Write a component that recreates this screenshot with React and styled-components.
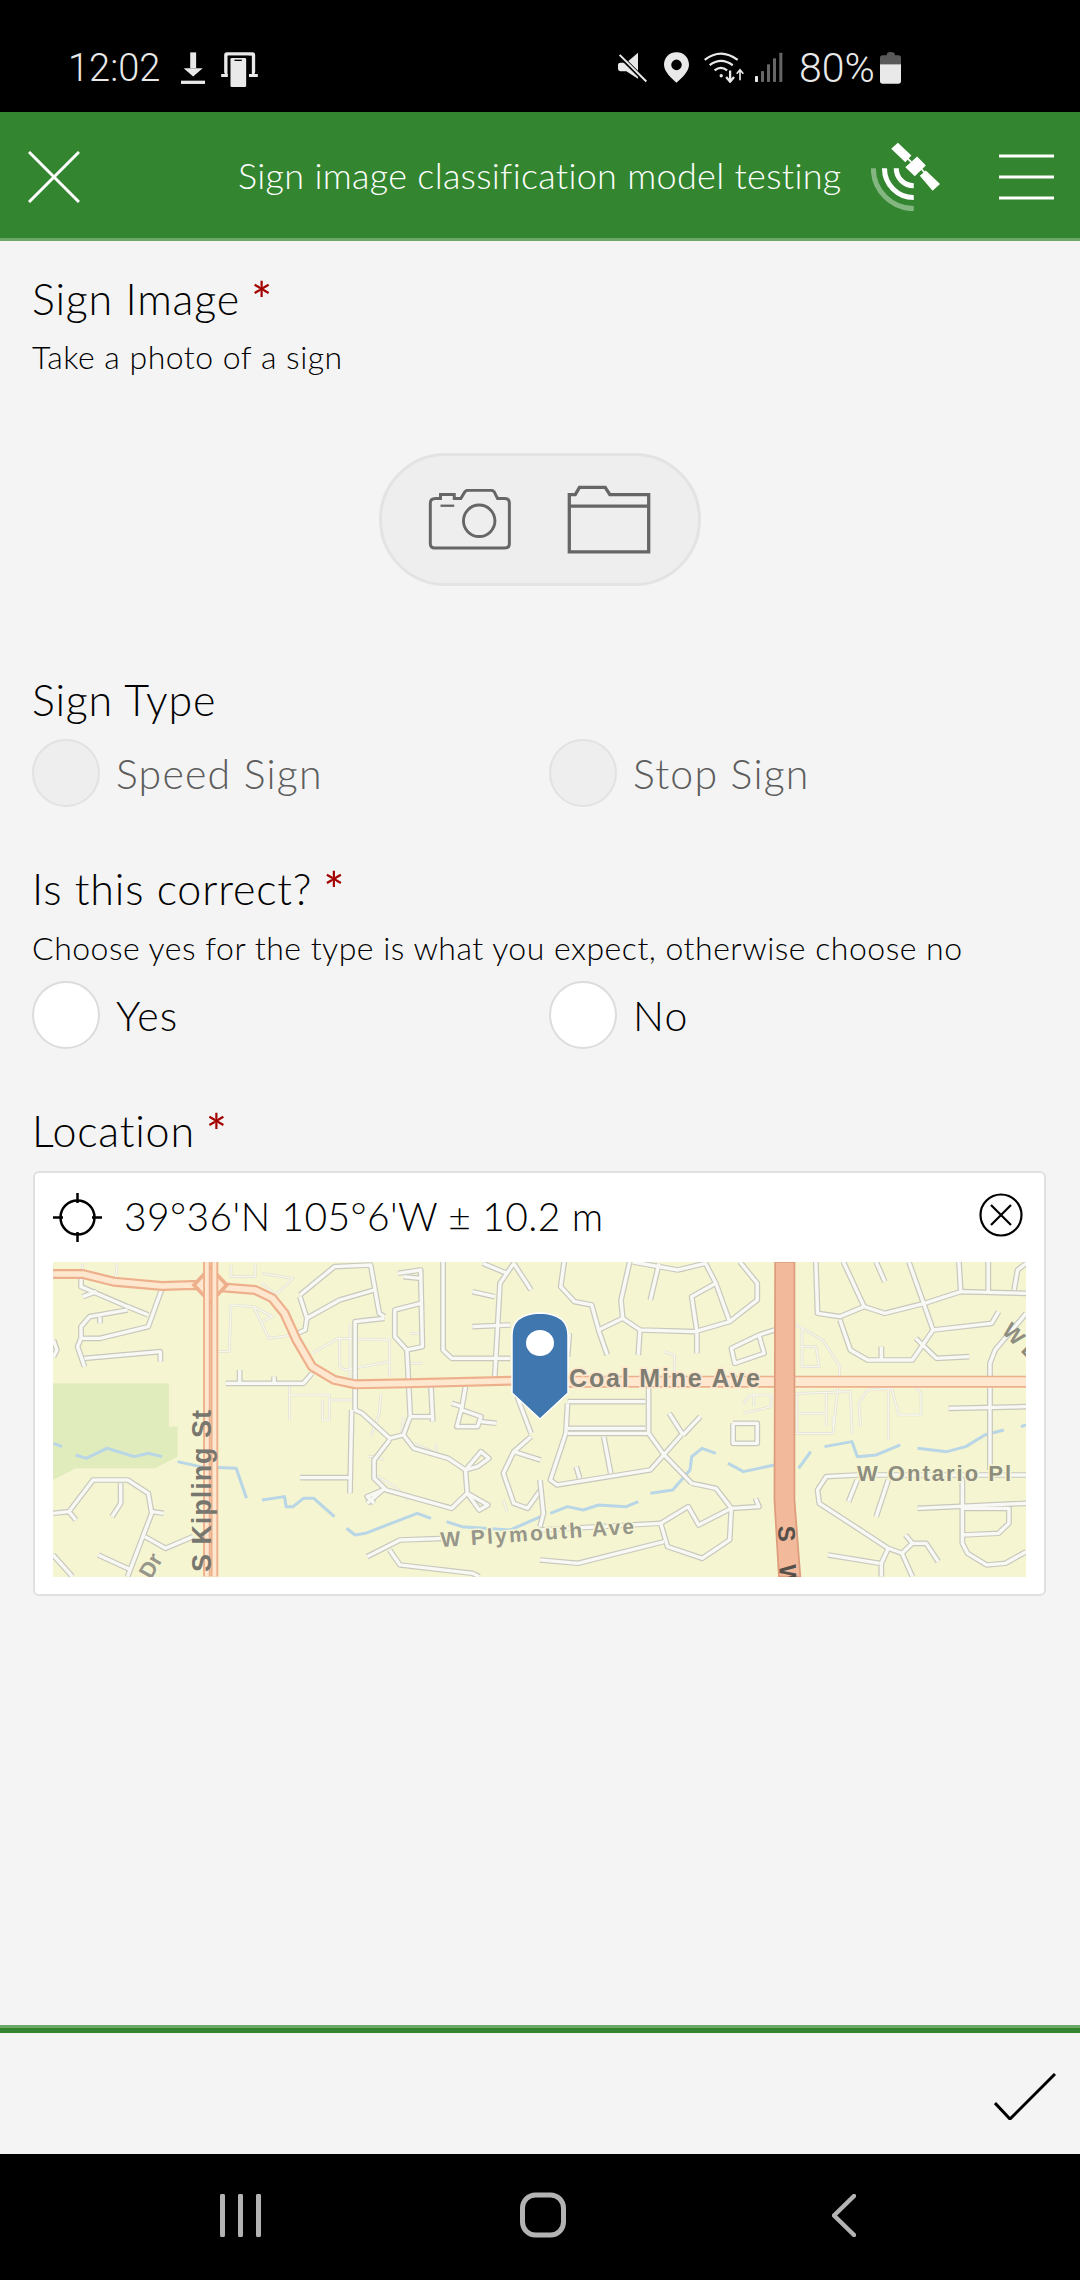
import React from 'react'
import styled, { createGlobalStyle } from 'styled-components'

const GlobalStyle = createGlobalStyle`
  html, body { margin: 0; padding: 0; background: #f4f4f4; }
  * { box-sizing: border-box; }
`

const Page = styled.div`
  width: 1080px;
  height: 2280px;
  display: flex;
  flex-direction: column;
  background: #f4f4f4;
  font-family: Lato, "Open Sans", sans-serif;
  color: #000;
  overflow: hidden;
`

const StatusBar = styled.div`
  height: 112px;
  flex: none;
  background: #000;
  color: #e9e9e9;
  display: flex;
  align-items: flex-start;
  padding: 52px 0 0 68px;
`
const StatusText = styled.span`
  font-family: Roboto, sans-serif;
  font-weight: 300;
  font-size: ${p => p.$size || 38}px;
  line-height: 32px;
  margin-left: ${p => p.$left || 0}px;
  width: ${p => p.$width}px;
  white-space: nowrap;
`
const StatusIcon = styled.svg`
  flex: none;
  display: block;
  margin-left: ${p => p.$left || 0}px;
`

const Header = styled.div`
  height: 129px;
  flex: none;
  background: #33862f;
  border-bottom: 3px solid #6ca968;
  display: flex;
  align-items: center;
  padding: 0 26px 0 28px;
  color: #fff;
`
const Title = styled.div`
  font-size: 36px;
  font-weight: 300;
  line-height: 44px;
  margin-left: 158px;
  width: 634px;
  white-space: nowrap;
  letter-spacing: 0.3px;
`
const HeaderIcon = styled.svg`
  flex: none;
  display: block;
  margin-left: ${p => p.$left || 0}px;
  margin-top: ${p => p.$top || 0}px;
`

const Content = styled.div`
  flex: 1;
  padding: 34px 32px 0;
`
const Label = styled.div`
  font-size: 43px;
  font-weight: 300;
  line-height: 48px;
  letter-spacing: 0.8px;
  margin-top: ${p => p.$top || 0}px;
`
const Required = styled.span`
  color: #a30000;
  font-size: 50px;
  font-weight: 400;
  line-height: 0;
  margin-left: 11px;
  vertical-align: -4px;
`
const Hint = styled.div`
  font-size: 32px;
  font-weight: 300;
  line-height: 36px;
  letter-spacing: 0.5px;
  margin-top: ${p => p.$top || 0}px;
`
const PillRow = styled.div`
  display: flex;
  justify-content: center;
  margin-top: 78px;
`
const Pill = styled.div`
  width: 322px;
  height: 133px;
  border-radius: 67px;
  background: #eeeeee;
  border: 3px solid #e3e3e3;
  display: flex;
  align-items: center;
  padding-left: 46px;
  gap: 55px;
`
const RadioRow = styled.div`
  display: grid;
  grid-template-columns: 517px 1fr;
  margin-top: ${p => p.$top}px;
`
const RadioItem = styled.div`
  display: flex;
  align-items: center;
  gap: 16px;
`
const Circle = styled.div`
  width: 68px;
  height: 68px;
  border-radius: 50%;
  border: 2px solid ${p => (p.$disabled ? '#e2e2e2' : '#dcdcdc')};
  background: ${p => (p.$disabled ? '#eeeeee' : '#ffffff')};
`
const RadioText = styled.span`
  font-size: 41px;
  font-weight: 300;
  letter-spacing: 1.2px;
  color: ${p => (p.$disabled ? '#5c5c5c' : '#000')};
`
const Card = styled.div`
  margin: 16px 2px 0 1px;
  height: 425px;
  border: 2px solid #e0e0e0;
  border-radius: 6px;
  background: #fff;
  padding: 20px 21px 0 18px;
`
const CardTop = styled.div`
  height: 69px;
  display: flex;
  align-items: flex-start;
`
const Coords = styled.div`
  flex: 1;
  font-size: 39px;
  font-weight: 300;
  line-height: 46px;
  margin-left: 22px;
  color: #000;
  letter-spacing: 0.4px;
`
const MapSvg = styled.svg`
  display: block;
  width: 973px;
  height: 315px;
  background: #f6f5d2;
`
const GreenRule = styled.div`
  height: 8px;
  flex: none;
  background: #33862f;
  border-top: 3px solid #6ca968;
`
const ToolBar = styled.div`
  height: 121px;
  flex: none;
  display: flex;
  justify-content: flex-end;
  padding: 40px 24px 0 0;
`
const NavBar = styled.div`
  height: 126px;
  flex: none;
  background: #000;
  display: flex;
  align-items: center;
  gap: 259px;
  padding: 0 0 4px 220px;
`
const BackIcon = styled.svg`
  margin-left: 7px;
  display: block;
`

// roads are written in crop coordinates (2.9x wide, 3x tall), one list per half of the map
const leftRoads = [
  '235,380 235,410 370,470 430,495', '470,415 430,530 290,565 235,565 225,590 245,650',
  '235,565 235,530 260,500 370,480', '245,625 465,605 465,635', '290,500 290,520', '240,440 280,425',
  '155,570 165,600 155,620', '870,435 970,350 1075,345 1100,490 1115,500', '870,440 890,505 985,450 1085,420',
  '890,505 885,540 850,555', '1155,370 1220,360 1225,590 1180,600 1145,560 1145,480 1220,460', '1170,380 1220,385',
  '1115,505 1030,515 1030,780 1050,790 1130,865 1170,855 1200,895 1300,925 1350,960 1355,1030 1310,1075 1120,1020 1085,985 1085,930 1130,870',
  '1180,600 1190,800 1170,855', '1285,336 1285,600 1310,625 1480,625', '1490,340 1450,400 1435,680',
  '1370,425 1435,440', '1370,530 1480,525', '1490,340 1540,420', '1400,340 1470,370',
  '655,700 880,700 905,670', '695,660 695,700', '795,680 795,700', '1020,780 1015,1030', '870,983 1015,983',
  '1250,710 1255,815', '1190,800 1255,800', '1350,710 1340,770 1310,760', '1340,770 1325,830 1385,830 1395,800 1340,780',
  '1395,815 1440,820', '1500,740 1540,850', '1540,860 1490,905 1460,970 1490,1060 1530,1075 1568,1020', '1490,905 1568,930',
  '154,1090 200,1085 270,990 370,990 430,1030 440,1090 370,1280', '440,1085 475,1090', '350,1000 350,1060 325,1100',
  '200,1085 220,1110', '420,1160 480,1195 560,1160', '285,1215 380,1260', '154,1215 210,1280',
  '1065,1220 1160,1170 1290,1165', '1130,1200 1160,1245 1370,1270 1390,1280',
  '1355,1030 1415,1065 1390,1080 1355,1030', '1350,960 1395,905 1418,925 1385,950 1350,960', '1065,1060 1110,1020 1065,1040 1085,1060',
]
const leftLight = [
  '240,340 235,375', '340,340 335,385', '850,555 780,565 735,470 670,465 665,605 630,605', '735,470 790,500 760,515',
  '670,345 670,380 740,380 740,340', '760,370 850,385 800,435 760,400', '905,610 980,565 1130,570 1130,680',
  '985,560 985,650 1000,660 1130,635', '1015,520 1015,690', '840,700 840,810', '840,735 955,735 955,810 935,810 935,750',
  '955,750 1030,750', '1105,730 1100,790 1075,860', '1200,880 1265,910 1265,880', '1170,800 1165,850',
  '1065,920 1085,920 1115,930', '1080,970 1145,1010 1185,1050', '1065,1060 1110,1020', '1460,1050 1470,1085', '1190,640 1225,640',
  '1190,550 1225,550',
]
const leftWater = [
  '155,880 180,890', '220,915 250,925 310,895 390,920 430,910 470,920', '515,935 580,950 685,955 715,1045',
  '760,1050 825,1040 830,1070 850,1070 880,1045 910,1045 970,1100', '1005,1135 1030,1155 1060,1150 1210,1090 1250,1105',
  '1295,1115 1340,1130 1480,1140 1568,1100',
]
const rightRoads = [
  '70,336 60,410 100,455 150,465 170,540 240,505 290,540 450,545 550,515 630,450 630,400 580,336',
  '240,505 235,450 260,336', '270,336 400,360 480,340', '345,340 320,450', '480,340 510,400 550,515', '510,400 440,440 455,545 455,610',
  '170,540 195,615', '290,540 285,615', '85,550 80,620', '315,710 315,850 360,915 440,1000', '80,755 305,755', '80,835 305,835', '80,850 315,850',
  '80,760 75,850 30,990 50,1005 320,960 410,855', '415,855 375,790', '415,855 465,800', '185,860 205,970', '105,950 115,985',
  '440,1000 510,1015 555,1075 460,1125 430,1070 350,1120 370,1190 470,1225 550,1170 555,1075 635,1070 625,1045',
  '0,1230 110,1240 360,1175', '0,1140 350,1120', '0,990 10,1090 0,1130', '680,540 635,555 555,595 565,640 650,610 635,555',
  '560,820 630,820 630,880 560,880 560,820', '800,336 805,490 870,500 940,470 1000,490 1115,460 1220,425 1410,430',
  '880,336 940,470', '975,336 1000,395', '1070,336 1140,540 1080,630 950,630 900,600 870,510', '1140,540 1310,520 1330,485',
  '1090,565 1150,625 1245,620', '990,590 990,630', '1215,336 1220,420', '1300,336 1300,425', '1375,420 1385,360 1410,340',
  '1305,960 1305,640 1320,600 1410,490', '1185,775 1410,770', '920,975 830,980 805,1020 810,1060 1010,1195 1050,1210 1080,1280',
  '1010,1195 990,1240 990,1280', '835,1215 985,1240', '1060,1155 1080,1180 1050,1210', '1080,1180 1120,1180 1155,1235',
  '920,990 895,1055', '1010,990 975,1100', '1095,1075 1410,1060', '1225,985 1225,1180 1240,1210 1295,1245 1350,1240 1410,1205',
  '1225,1075 1360,1075 1360,1120 1330,1150 1225,1155', '920,975 1410,975',
]
const rightLight = [
  '735,520 820,570 870,650 850,850 745,850 745,730 900,725 905,850', '760,530 760,650 810,650 800,590 760,590',
  '930,830 925,760 950,720 1020,715 1040,795 1105,795 1105,730 1085,705', '1010,715 1010,870', '830,730 830,830', '850,800 850,830',
  '750,790 830,790', '360,605 390,615 390,680', '590,790 670,770 670,735 610,735 590,760', '620,730 620,770',
]
const rightWater = [
  '30,1090 80,1070 125,1080 170,1065 250,1070 285,1055', '320,1030 385,1020 435,960 440,920 470,895 510,910',
  '545,940 590,965 680,945', '750,955 785,905', '825,890 905,875 920,920 975,915 1045,885',
  '1095,895 1180,905 1235,890 1290,855 1345,840', '1395,830 1410,825',
]
const arterial = ['154,372 240,372 330,395 470,408 560,405 740,420 790,445 825,490 860,570 905,650 970,690 1030,703 1180,700 1568,690']
const kipling = ['600,336 600,1280', '622,336 622,1280']
const coalMine = ['0,695 680,695', '735,695 1410,695']

const Lines = ({ list, color, width }) => (
  <g fill="none" stroke={color} strokeWidth={width} strokeLinejoin="round">
    {list.map(points => <polyline key={points} points={points} />)}
  </g>
)

const MapLabel = styled.text`
  font-family: "Liberation Sans", Arial, sans-serif;
  font-weight: 700;
  fill: ${p => p.$color || '#7d7d72'};
  stroke: ${p => p.$halo || 'none'};
  stroke-width: 3px;
  paint-order: stroke;
`

const MapDrawing = () => (
  <MapSvg viewBox="0 0 973 315">
    <g transform="translate(-53 -112) scale(0.3448 0.3333)">
      <polygon fill="#e1ecbd" points="154,700 490,700 490,830 515,830 515,920 450,955 220,955 154,990" />
      <Lines list={leftWater} color="#b8d6e6" width={9} />
      <Lines list={leftLight} color="#e2e1d0" width={8} />
      <Lines list={leftLight} color="#f7f7ee" width={4} />
      <Lines list={leftRoads} color="#c8c8bd" width={17} />
      <Lines list={leftRoads} color="#f8f8f4" width={10} />
      <Lines list={arterial} color="#eeb08c" width={30} />
      <Lines list={arterial} color="#fde7cf" width={17} />
      <polygon fill="#eeb08c" points="610,345 665,405 610,465 555,405" />
      <polygon fill="#fde7cf" points="610,360 650,405 610,450 570,405" />
      <Lines list={kipling} color="#eeb08c" width={22} />
      <Lines list={kipling} color="#fde7cf" width={11} />
    </g>
    <g transform="translate(487 -112) scale(0.3448 0.3333)">
      <Lines list={rightWater} color="#b8d6e6" width={9} />
      <Lines list={rightLight} color="#e2e1d0" width={8} />
      <Lines list={rightLight} color="#f7f7ee" width={4} />
      <Lines list={rightRoads} color="#c8c8bd" width={17} />
      <Lines list={rightRoads} color="#f8f8f4" width={10} />
      <Lines list={coalMine} color="#eeb08c" width={36} />
      <Lines list={coalMine} color="#fde7cf" width={26} />
      <polygon fill="#f2b99b" stroke="#dd9c7c" strokeWidth="5" points="682,336 738,336 738,1050 755,1280 693,1280 680,1050" />
    </g>
    <path fill="#3f77ae" stroke="#fff" strokeWidth="1.5" d="M459 73 Q459 52 487 51 Q515 52 515 73 V131 L487 157 L459 131 Z" />
    <ellipse cx="487" cy="81" rx="14" ry="13" fill="#fff" />
    <MapLabel x="516" y="125" fontSize="25" textLength="191" $halo="#fde7cf">Coal Mine Ave</MapLabel>
    <MapLabel transform="translate(158 310) rotate(-90)" fontSize="27" textLength="162" $color="#777770">S Kipling St</MapLabel>
    <MapLabel transform="translate(388 285) rotate(-4)" fontSize="21" textLength="194" $color="#96968a" $halo="#f6f5d2">W Plymouth Ave</MapLabel>
    <MapLabel x="804" y="219" fontSize="22" textLength="154" $color="#8d8d80" $halo="#f6f5d2">W Ontario Pl</MapLabel>
    <MapLabel transform="translate(98 318) rotate(-60)" fontSize="22" $color="#96968a">Dr</MapLabel>
    <MapLabel transform="translate(948 70) rotate(45)" fontSize="22" $color="#8d8d80">W E</MapLabel>
    <MapLabel transform="translate(725 264) rotate(88)" fontSize="24" letterSpacing="8" $color="#55504a">S W</MapLabel>
  </MapSvg>
)

const RadioOption = ({ label, disabled }) => (
  <RadioItem>
    <Circle $disabled={disabled} />
    <RadioText $disabled={disabled}>{label}</RadioText>
  </RadioItem>
)

function App() {
  return (
    <Page>
      <GlobalStyle />
      <StatusBar>
        <StatusText $width={113}>12:02</StatusText>
        <StatusIcon width="24" height="33" viewBox="392 97 73 98" $left={0}>
          <rect x="420" y="97" width="18" height="48" fill="#e9e9e9" />
          <polygon points="400,145 458,145 429,170" fill="#e9e9e9" />
          <rect x="392" y="183" width="73" height="10" fill="#e9e9e9" />
        </StatusIcon>
        <StatusIcon width="37" height="35" viewBox="513 97 110 105" $left={16}>
          <rect x="522" y="98" width="93" height="66" rx="8" fill="#e9e9e9" />
          <rect x="532" y="108" width="73" height="56" fill="#000" />
          <rect x="513" y="163" width="20" height="9" fill="#e9e9e9" />
          <rect x="596" y="163" width="27" height="9" fill="#e9e9e9" />
          <rect x="534" y="108" width="62" height="94" fill="#000" />
          <rect x="541" y="115" width="47" height="87" rx="4" fill="#e9e9e9" />
          <rect x="553" y="120" width="22" height="4" fill="#000" />
        </StatusIcon>
        <StatusIcon width="30" height="31" viewBox="55 98 90 92" $left={360}>
          <path d="M115 100 V178 L80 155 H62 Q55 155 55 148 V136 Q55 130 62 130 H80 Z" fill="#e9e9e9" />
          <line x1="52" y1="100" x2="142" y2="190" stroke="#000" strokeWidth="13" />
          <line x1="60" y1="106" x2="140" y2="186" stroke="#e9e9e9" strokeWidth="6" />
        </StatusIcon>
        <StatusIcon width="25" height="31" viewBox="192 98 76 92" $left={16}>
          <path fillRule="evenodd" fill="#e9e9e9" d="M230 98 C255 98 268 117 268 136 C268 157 245 178 230 190 C215 178 192 157 192 136 C192 117 205 98 230 98 Z M230 120 A16 16 0 1 0 230 152 A16 16 0 1 0 230 120 Z" />
        </StatusIcon>
        <StatusIcon width="41" height="31" viewBox="314 96 124 94" $left={15}>
          <g fill="none" stroke="#e9e9e9" strokeWidth="7">
            <path d="M316 120 Q365 82 416 120" />
            <path d="M331 136 Q365 110 401 136" />
            <path d="M346 152 Q365 136 384 152" />
            <path d="M393 152 V184 M381 172 L393 186 L405 172" />
            <path d="M423 182 V152 M413 162 L423 150 L433 162" strokeWidth="5" />
          </g>
          <circle cx="366" cy="168" r="5" fill="#e9e9e9" />
        </StatusIcon>
        <StatusIcon width="28" height="30" viewBox="466 96 84 90" $left={10}>
          <rect x="466" y="168" width="9" height="18" rx="2" fill="#e9e9e9" />
          <rect x="484" y="153" width="9" height="33" rx="2" fill="#666" />
          <rect x="502" y="133" width="9" height="53" rx="2" fill="#666" />
          <rect x="520" y="115" width="9" height="71" rx="2" fill="#666" />
          <rect x="539" y="98" width="9" height="88" rx="2" fill="#666" />
        </StatusIcon>
        <StatusText $left={16} $width={81} $size={41}>80%</StatusText>
        <StatusIcon width="21" height="32" viewBox="840 95 63 96">
          <path d="M860 105 Q860 95 872 95 Q885 95 885 105 H895 Q903 105 903 113 V132 H840 V113 Q840 105 848 105 Z" fill="#595959" />
          <path d="M840 132 H903 V182 Q903 190 895 190 H848 Q840 190 840 182 Z" fill="#e9e9e9" />
        </StatusIcon>
      </StatusBar>

      <Header>
        <HeaderIcon width="52" height="52" viewBox="0 0 52 52" $top={4}>
          <path d="M1 1 L51 51 M51 1 L1 51" stroke="#fff" strokeWidth="3" fill="none" />
        </HeaderIcon>
        <Title>Sign image classification model testing</Title>
        <HeaderIcon width="69" height="69" viewBox="95 70 205 205" $left={30} $top={2}>
          <g fill="#fff">
            <polygon points="155,90 175,72 215,110 197,130" />
            <polygon points="197,145 232,113 258,140 225,172" />
            <polygon points="240,170 258,155 300,195 278,215" />
            <path d="M205 120 L215 130 M245 150 L255 162" stroke="#fff" strokeWidth="5" />
          </g>
          <g fill="none" stroke="#fff" strokeWidth="15">
            <path d="M170 148 A52 52 0 0 0 222 200" />
            <path d="M135 148 A87 87 0 0 0 222 235" />
            <path d="M102 148 A120 120 0 0 0 222 268" opacity="0.4" />
          </g>
        </HeaderIcon>
        <HeaderIcon width="55" height="46" viewBox="0 0 55 46" $left={59} $top={4}>
          <path d="M0 2 H55 M0 23 H55 M0 44 H55" stroke="#fff" strokeWidth="3" />
        </HeaderIcon>
      </Header>

      <Content>
        <Label>Sign Image<Required>*</Required></Label>
        <Hint $top={16}>Take a photo of a sign</Hint>
        <PillRow>
          <Pill>
            <svg width="84" height="61" viewBox="203 178 254 186">
              <g fill="none" stroke="#666" strokeWidth="9">
                <path d="M225 207 H240 V195 H282 V207 H302 L314 187 Q318 182 324 182 H394 Q400 182 404 187 L414 207 H436 Q450 207 450 221 V345 Q450 358 436 358 H222 Q209 358 209 345 V221 Q209 207 225 207 Z" />
                <circle cx="358" cy="275" r="48" />
                <path d="M240 229 H282" strokeWidth="7" />
              </g>
            </svg>
            <svg width="84" height="69" viewBox="620 166 255 209">
              <g fill="none" stroke="#666" strokeWidth="10">
                <path d="M627 369 V195 H645 L658 173 H736 L750 195 H868 V369 Z" />
                <path d="M627 230 H868" />
              </g>
            </svg>
          </Pill>
        </PillRow>

        <Label $top={90}>Sign Type</Label>
        <RadioRow $top={15}>
          <RadioOption label="Speed Sign" disabled />
          <RadioOption label="Stop Sign" disabled />
        </RadioRow>

        <Label $top={58}>Is this correct?<Required>*</Required></Label>
        <Hint $top={17}>Choose yes for the type is what you expect, otherwise choose no</Hint>
        <RadioRow $top={15}>
          <RadioOption label="Yes" />
          <RadioOption label="No" />
        </RadioRow>

        <Label $top={58}>Location<Required>*</Required></Label>
        <Card>
          <CardTop>
            <svg width="49" height="49" viewBox="0 0 49 49">
              <circle cx="24.5" cy="24.5" r="17" fill="none" stroke="#000" strokeWidth="2.5" />
              <path d="M24.5 0 V10 M24.5 39 V49 M0 24.5 H10 M39 24.5 H49" stroke="#000" strokeWidth="2.5" />
            </svg>
            <Coords>39°36'N 105°6'W ± 10.2 m</Coords>
            <svg width="44" height="44" viewBox="0 0 44 44">
              <circle cx="22" cy="22" r="20.5" fill="none" stroke="#000" strokeWidth="2.2" />
              <path d="M12 12 L32 32 M32 12 L12 32" stroke="#000" strokeWidth="2.2" />
            </svg>
          </CardTop>
          <MapDrawing />
        </Card>
      </Content>

      <GreenRule />
      <ToolBar>
        <svg width="62" height="47" viewBox="0 0 62 47">
          <path d="M1 30 L16 46 L61 1" fill="none" stroke="#000" strokeWidth="3" />
        </svg>
      </ToolBar>
      <NavBar>
        <svg width="41" height="43" viewBox="0 0 41 43">
          <path d="M2.5 2 V41 M20.5 2 V41 M38.5 2 V41" stroke="#b3b3b3" strokeWidth="5" strokeLinecap="round" />
        </svg>
        <svg width="46" height="46" viewBox="0 0 46 46">
          <rect x="2.5" y="3" width="41" height="40" rx="13" fill="none" stroke="#b3b3b3" strokeWidth="5" />
        </svg>
        <BackIcon width="24" height="43" viewBox="0 0 24 43">
          <path d="M22 2 L2 21.5 L22 41" fill="none" stroke="#b3b3b3" strokeWidth="4.5" strokeLinecap="round" strokeLinejoin="round" />
        </BackIcon>
      </NavBar>
    </Page>
  )
}

export default App
